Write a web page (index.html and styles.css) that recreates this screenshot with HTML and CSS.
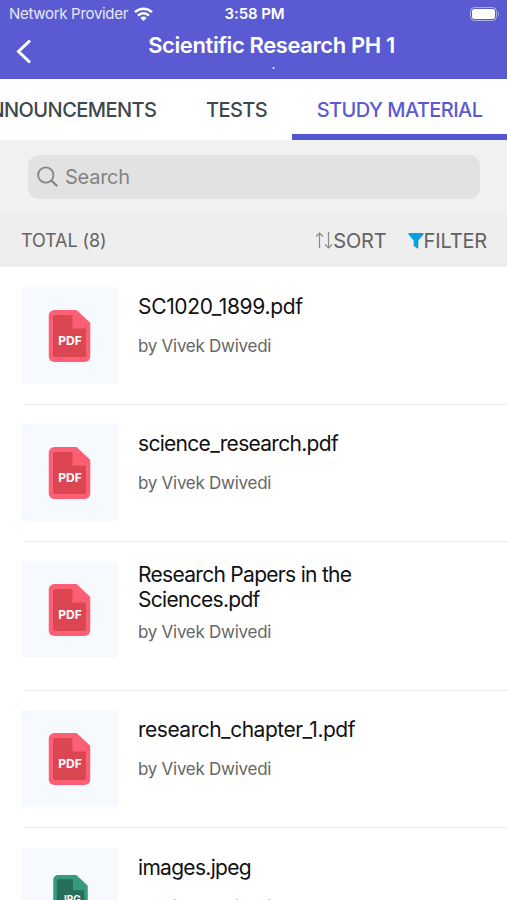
FILE: index.html
```html
<!DOCTYPE html>
<html lang="en">
<head>
    <meta charset="UTF-8">
    <meta name="viewport" content="width=device-width, initial-scale=1.0">
    <title>Scientific Research PH 1 - Study Material</title>
    <link rel="stylesheet" href="styles.css">
</head>
<body>
    <!-- Shapes shared by the file rows -->
    <svg class="shapes" width="0" height="0">
        <symbol id="file" viewBox="0 0 42 52">
            <path fill="currentColor" d="M6 0h22l14 13v33a6 6 0 0 1-6 6H6a6 6 0 0 1-6-6V6a6 6 0 0 1 6-6z"/>
            <path class="sheet" d="M6.500 5H24v13.500h13.500V45a2 2 0 0 1-2 2h-29a2 2 0 0 1-2-2V7a2 2 0 0 1 2-2z"/>
        </symbol>
    </svg>

    <header class="header">
        <div class="status-bar">
            <span class="carrier">Network Provider
                <svg class="wifi" width="19" height="14" viewBox="0 0 19 14">
                    <path fill="none" stroke="#fff" stroke-width="2.500" d="M1 5.200a12.200 12.200 0 0 1 17 0M4 8.600a7.900 7.900 0 0 1 11 0"/>
                    <path fill="#fff" d="M9.500 14L6.300 10.900a4.600 4.600 0 0 1 6.400 0z"/>
                </svg>
            </span>
            <span class="time">3:58 PM</span>
            <svg class="battery" width="30" height="14" viewBox="0 0 30 14">
                <rect x=".5" y=".5" width="26" height="13" rx="4" fill="none" stroke="#fff" stroke-opacity=".5"/>
                <rect x="2" y="2" width="23" height="10" rx="2.500" fill="#fff"/>
                <path fill="#fff" fill-opacity=".5" d="M28 4.500q2 2.500 0 5z"/>
            </svg>
        </div>
        <div class="title-bar">
            <svg class="back" width="16" height="25" viewBox="0 0 16 25">
                <path fill="none" stroke="#fff" stroke-width="3" d="M14 1.500L2.500 12.500 14 23.500"/>
            </svg>
            <div class="title">
                <h1>Scientific Research PH 1</h1>
                <p class="subtitle">.</p>
            </div>
        </div>
    </header>

    <nav class="tabs">
        <a class="tab">ANNOUNCEMENTS</a>
        <a class="tab">TESTS</a>
        <a class="tab active">STUDY MATERIAL</a>
    </nav>

    <div class="search-area">
        <div class="search">
            <svg width="22" height="22" viewBox="0 0 22 22">
                <path fill="none" stroke="#838383" stroke-width="1.800" d="M16.500 9a7.700 7.700 0 1 1-15.400 0 7.700 7.700 0 0 1 15.400 0z"/>
                <path stroke="#838383" stroke-width="2.200" d="M14.300 14.500l6 5.800"/>
            </svg>
            <span>Search</span>
        </div>
    </div>

    <div class="toolbar">
        <span class="total">TOTAL (8)</span>
        <span class="action sort">
            <svg width="18" height="17" viewBox="0 0 18 17">
                <path fill="none" stroke="#8a8a8a" stroke-width="1.200" d="M4.500 16V1.500M1 4.500L4.500 1 8 4.500M13.500 0v15.500M10 12.500l3.500 3.500 3.500-3.500"/>
            </svg>SORT
        </span>
        <span class="action filter">
            <svg width="16" height="16" viewBox="0 0 16 16">
                <path fill="#0a9de0" d="M1 0h14q1.200.6.500 1.600L10.300 7.500V16l-4.600-3V7.500L.5 1.600Q-.2.600 1 0z"/>
            </svg>FILTER
        </span>
    </div>

    <main class="files">
        <div class="file">
            <div class="thumb">
                <svg class="icon pdf" viewBox="0 0 42 52"><use href="#file"/><text x="21.500" y="34.500">PDF</text></svg>
            </div>
            <div class="info">
                <h2 class="digits">SC1020_1899.pdf</h2>
                <p>by Vivek Dwivedi</p>
            </div>
        </div>
        <div class="file">
            <div class="thumb">
                <svg class="icon pdf" viewBox="0 0 42 52"><use href="#file"/><text x="21.500" y="34.500">PDF</text></svg>
            </div>
            <div class="info">
                <h2>science_research.pdf</h2>
                <p>by Vivek Dwivedi</p>
            </div>
        </div>
        <div class="file two-line">
            <div class="thumb">
                <svg class="icon pdf" viewBox="0 0 42 52"><use href="#file"/><text x="21.500" y="34.500">PDF</text></svg>
            </div>
            <div class="info">
                <h2>Research Papers in the<br>Sciences.pdf</h2>
                <p>by Vivek Dwivedi</p>
            </div>
        </div>
        <div class="file">
            <div class="thumb">
                <svg class="icon pdf" viewBox="0 0 42 52"><use href="#file"/><text x="21.500" y="34.500">PDF</text></svg>
            </div>
            <div class="info">
                <h2 class="underscored">research_chapter_1.pdf</h2>
                <p>by Vivek Dwivedi</p>
            </div>
        </div>
        <div class="file last">
            <div class="thumb">
                <svg class="icon jpg" viewBox="0 0 42 52"><use href="#file"/><text x="21.500" y="34">JPG</text></svg>
            </div>
            <div class="info">
                <h2>images.jpeg</h2>
                <p>by Vivek Dwivedi</p>
            </div>
        </div>
    </main>
</body>
</html>
```
FILE: styles.css
```css
* {
    box-sizing: border-box;
}

body {
    font-family: Inter, "Liberation Sans", sans-serif;
    margin: 0;
    height: 900px;
    overflow: hidden;
    display: flex;
    flex-direction: column;
    background-color: #ffffff;
}

h1, h2, p {
    margin: 0;
    font-weight: 400;
}

svg {
    display: block;
    flex: none;
}

.shapes {
    position: absolute;
}

/* Header */
.header {
    flex: none;
    height: 79px;
    background-color: #5a5bd2;
    color: #ffffff;
}

.status-bar {
    display: grid;
    grid-template-columns: 1fr auto 1fr;
    align-items: center;
    height: 27px;
    padding: 0 7px 0 9px;
    font-size: 15px;
}

.carrier {
    display: flex;
    align-items: center;
    gap: 6px;
    color: #e6e6fb;
    white-space: nowrap;
    letter-spacing: -0.3px;
}

.time {
    font-weight: 600;
    letter-spacing: -0.1px;
}

.battery {
    justify-self: end;
}

.title-bar {
    display: flex;
    padding-left: 16px;
}

.back {
    margin-top: 12px;
}

.title {
    flex: 1;
    margin-left: 4px;
    text-align: center;
}

.title h1 {
    font-size: 22px;
    font-weight: 600;
    line-height: 37px;
    letter-spacing: -0.4px;
}

.subtitle {
    padding-left: 4px;
    font-size: 12px;
    font-weight: 600;
    line-height: 1px;
}

/* Tabs */
.tabs {
    flex: none;
    display: flex;
    justify-content: flex-end;
    height: 61px;
    font-size: 20px;
    font-weight: 550;
    letter-spacing: -0.55px;
    color: #3d474c;
}

.tab {
    flex: none;
    padding: 0 24.5px 0 25px;
    line-height: 62px;
    white-space: nowrap;
}

.tab.active {
    color: #5a5bd2;
    border-bottom: 6px solid #5455d0;
}

/* Search */
.search-area {
    flex: none;
    height: 74px;
    padding: 15px 27px 0 28px;
    background-color: #f1f1f1;
}

.search {
    display: flex;
    align-items: center;
    gap: 6px;
    height: 44px;
    padding-left: 9px;
    border-radius: 11px;
    background-color: #e2e2e2;
    color: #838383;
    font-size: 20px;
    letter-spacing: -0.25px;
}

/* Sort and filter */
.toolbar {
    flex: none;
    display: flex;
    align-items: center;
    height: 53px;
    padding: 0 20px 0 21px;
    background-color: #eeeeee;
    color: #626262;
    font-size: 20px;
    letter-spacing: -0.15px;
}

.total {
    flex: 1;
    font-size: 18px;
    letter-spacing: -0.1px;
}

.action {
    display: flex;
    align-items: center;
}

.sort {
    margin-right: 21px;
}

/* File list */
.files {
    padding-top: 1px;
}

.file {
    display: flex;
    gap: 20px;
    height: 137px;
    padding-top: 19px;
    margin-left: 21px;
    background: linear-gradient(#e8e8e8, #e8e8e8) 4px 100% / 100% 1px no-repeat;
}

.file.two-line {
    height: 149px;
}

.thumb {
    display: flex;
    justify-content: center;
    align-items: center;
    width: 97px;
    height: 97px;
    border-radius: 4px;
    background-color: #f6f9fe;
}

.last .thumb {
    margin-top: 1px;
}

.icon {
    width: 43px;
    height: 52px;
}

.icon text {
    fill: #ffffff;
    font-size: 12px;
    font-weight: 700;
    text-anchor: middle;
}

.pdf {
    color: #fd6074;
    --sheet: #dc4653;
}

.jpg {
    width: 35px;
    height: 43px;
    margin-left: 1px;
    color: #349b7b;
    --sheet: #276e5b;
}

.sheet {
    fill: var(--sheet);
}

.info h2 {
    padding-top: 7px;
    color: #111111;
    font-size: 21px;
    line-height: 25px;
    letter-spacing: -0.7px;
    white-space: nowrap;
}

.info .digits {
    letter-spacing: -0.33px;
}

.info .underscored {
    letter-spacing: -0.5px;
}

.info p {
    margin-top: 15px;
    color: #666666;
    font-size: 17px;
    line-height: 24px;
    letter-spacing: -0.27px;
}

.last .info h2 {
    padding-top: 8px;
}

.two-line .info h2 {
    padding-top: 1px;
}

.two-line .info p {
    margin-top: 8px;
}
```
